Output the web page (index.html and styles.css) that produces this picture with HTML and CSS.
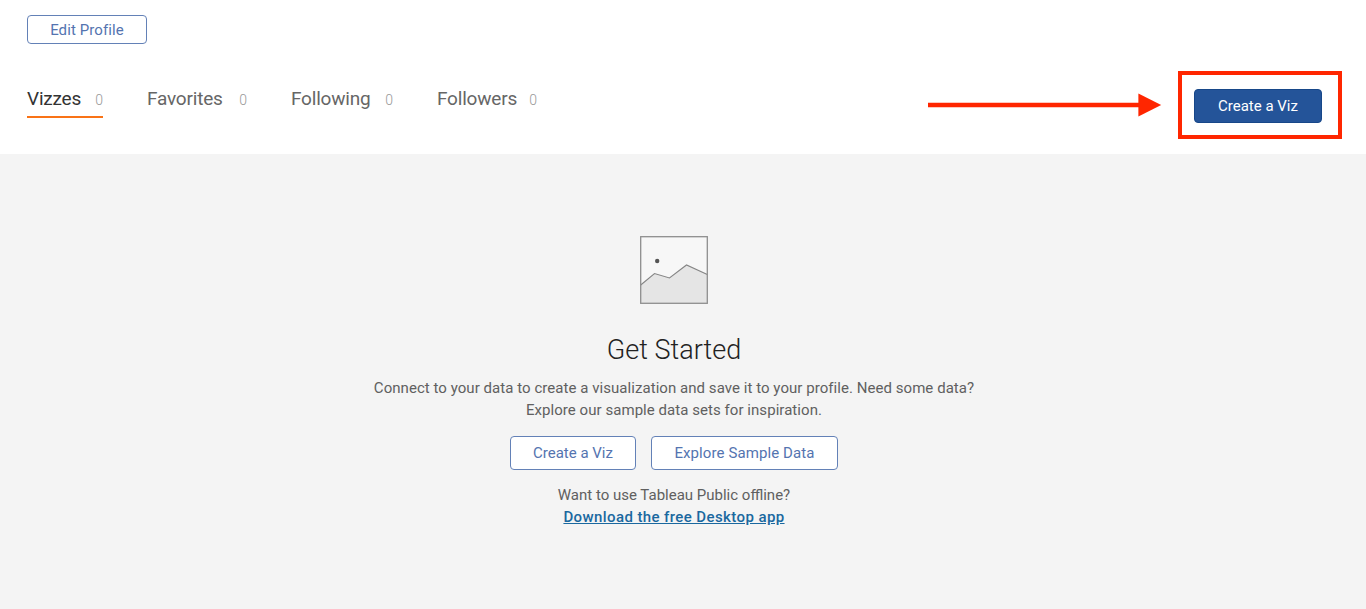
FILE: index.html
```html
<!DOCTYPE html>
<html lang="en">
<head>
    <meta charset="UTF-8">
    <meta name="viewport" content="width=device-width, initial-scale=1.0">
    <title>Profile</title>
    <link rel="stylesheet" href="styles.css">
</head>
<body>

    <header class="profile-header">
        <button class="btn edit-profile">Edit Profile</button>

        <div class="profile-bar">
            <nav class="tabs">
                <a class="tab active">Vizzes <span class="count">0</span></a>
                <a class="tab">Favorites <span class="count">0</span></a>
                <a class="tab following">Following <span class="count">0</span></a>
                <a class="tab">Followers <span class="count">0</span></a>
            </nav>

            <div class="create">
                <!-- Arrow pointing at the button -->
                <svg class="arrow" width="234" height="24" viewBox="0 0 234 24">
                    <path d="M0 12H212" stroke="#ff2600" stroke-width="4.6"/>
                    <path d="M210.4 .6L233.2 12L210.4 23.4Z" fill="#ff2600"/>
                </svg>
                <div class="highlight">
                    <button class="btn btn-primary">Create a Viz</button>
                </div>
            </div>
        </div>
    </header>

    <main class="get-started">
        <svg class="placeholder" width="68" height="68" viewBox="0 0 68 68">
            <rect x=".7" y=".7" width="66.6" height="66.6" fill="#f7f7f7"/>
            <path d="M.7 49L14.5 37.5L29.5 42L46.5 29L67.3 38.5V67.3H.7Z" fill="#e5e5e5"/>
            <path d="M.7 49L14.5 37.5L29.5 42L46.5 29L67.3 38.5" fill="none" stroke="#858585" stroke-width="1.1"/>
            <rect x=".7" y=".7" width="66.6" height="66.6" fill="none" stroke="#8e8e8e" stroke-width="1.3"/>
            <circle cx="17.2" cy="25" r="2.2" fill="#555"/>
        </svg>
        <h1>Get Started</h1>
        <p class="intro">Connect to your data to create a visualization and save it to your profile. Need some data?<br>Explore our sample data sets for inspiration.</p>
        <div class="actions">
            <button class="btn create-viz">Create a Viz</button>
            <button class="btn explore">Explore Sample Data</button>
        </div>
        <p class="offline">Want to use Tableau Public offline?<br><a class="download">Download the free Desktop app</a></p>
    </main>

</body>
</html>
```
FILE: styles.css
```css
* {
    box-sizing: border-box;
}

body {
    margin: 0;
    min-height: 100vh;
    display: flex;
    flex-direction: column;
    font-family: Roboto, "Liberation Sans", sans-serif;
    font-size: 15px;
    font-weight: 400;
    color: #606060;
    background-color: #fff;
    overflow: hidden;
}

.profile-header {
    height: 154px;
    padding: 15px 24px 0 27px;
}

.btn {
    display: block;
    height: 34px;
    padding: 0;
    font-family: inherit;
    font-size: 15px;
    color: #5474b0;
    background-color: #fff;
    border: 1.4px solid #6381b7;
    border-radius: 4px;
    cursor: pointer;
}

.edit-profile {
    width: 120px;
    height: 29px;
    letter-spacing: 0.1px;
}

.profile-bar {
    display: flex;
    justify-content: space-between;
    margin-top: 27px;
}

/* Tabs */
.tabs {
    display: flex;
    gap: 44px;
    height: 47px;
}

.tab {
    display: flex;
    justify-content: space-between;
    align-items: baseline;
    width: 100px;
    padding-top: 16px;
    font-size: 19px;
    line-height: 24px;
    letter-spacing: -0.2px;
    color: #666;
}

.tab.following {
    width: 102px;
}

.tab.active {
    width: 76px;
    color: #333;
    border-bottom: 2px solid #f97316;
}

.count {
    font-size: 14px;
    font-weight: 300;
    letter-spacing: 0;
    color: #999;
}

/* Create button */
.create {
    display: flex;
    align-items: center;
    gap: 16px;
    height: 68px;
}

.highlight {
    width: 164px;
    height: 68px;
    display: flex;
    align-items: center;
    justify-content: center;
    border: 4px solid #ff2600;
}

.btn-primary {
    width: 128px;
    margin: 2px 4px 0 0;
    color: #fff;
    background-color: #245499;
    border: 1px solid #174789;
}

/* Empty state */
.get-started {
    flex: 1;
    display: flex;
    flex-direction: column;
    align-items: center;
    padding: 82px 18px 0 0;
    text-align: center;
    background-color: #f4f4f4;
}

.get-started h1 {
    margin: 28px 0 0;
    font-size: 27px;
    font-weight: 300;
    line-height: 36px;
    color: #222;
}

.intro,
.offline {
    margin: 9px 0 0;
    line-height: 22px;
}

.intro {
    letter-spacing: 0.05px;
}

.actions {
    display: flex;
    gap: 15px;
    margin-top: 15px;
}

.create-viz {
    width: 126px;
}

.explore {
    width: 187px;
    letter-spacing: 0.1px;
}

.offline {
    margin-top: 14px;
}

.download {
    font-weight: 500;
    letter-spacing: 0.4px;
    color: #1a689f;
    text-decoration: underline;
}
```
